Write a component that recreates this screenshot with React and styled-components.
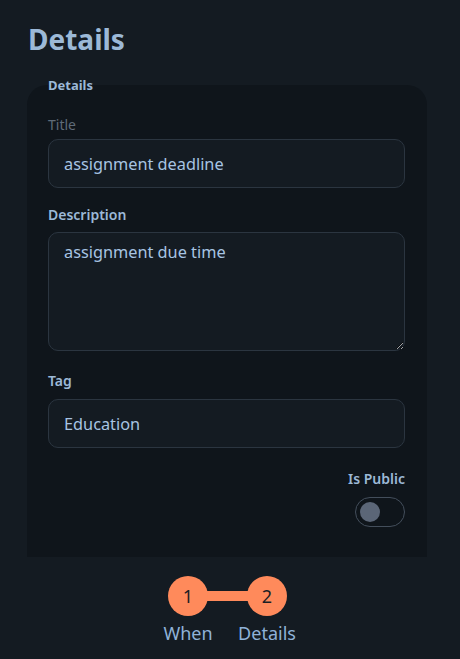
import React from 'react';
import styled, { createGlobalStyle } from 'styled-components';

const GlobalStyle = createGlobalStyle`
  html, body {
    margin: 0;
    padding: 0;
    background: #141b22;
    font-family: "Noto Sans", "Open Sans", sans-serif;
  }
`;

const Page = styled.div`
  width: 460px;
  height: 659px;
  padding: 21px 33px 0 27px;
  box-sizing: border-box;
  display: flex;
  flex-direction: column;
`;

const Heading = styled.h1`
  margin: 0 0 19px 1px;
  font-size: 28px;
  font-weight: 700;
  line-height: 36px;
  color: #9cb9d7;
`;

const Card = styled.fieldset`
  margin: 0;
  padding: 6px 22px 14px 21px;
  border: none;
  border-radius: 20px 20px 0 0;
  background: #0f151b;
  display: flex;
  flex-direction: column;
  height: 481px;
  box-sizing: border-box;
  min-width: 0;
`;

const Legend = styled.legend`
  padding: 0;
  font-size: 13px;
  font-weight: 700;
  color: #9cb9d7;
`;

const Label = styled.label`
  display: block;
  font-size: 14px;
  line-height: 20px;
  font-weight: ${p => (p.$muted ? 400 : 600)};
  color: ${p => (p.$muted ? '#5f6b78' : '#9cb9d7')};
  margin: ${p => p.$top || 0}px 0 ${p => p.$bottom ?? 7}px 0;
  text-align: ${p => (p.$right ? 'right' : 'left')};
`;

const Input = styled.input`
  width: 100%;
  box-sizing: border-box;
  height: 49px;
  padding: 0 15px;
  border: 1px solid #2b3540;
  border-radius: 10px;
  background: #141b22;
  color: #a7c4e2;
  font-family: inherit;
  font-size: 16.3px;
  outline: none;
`;

const TextArea = styled.textarea`
  width: 100%;
  box-sizing: border-box;
  height: 119px;
  padding: 7px 15px;
  border: 1px solid #2b3540;
  border-radius: 10px;
  background: #141b22;
  color: #a7c4e2;
  font-family: inherit;
  font-size: 16.3px;
  line-height: 24px;
  outline: none;
  resize: vertical;
  display: block;
`;

const SwitchRow = styled.div`
  display: flex;
  flex-direction: column;
  align-items: flex-end;
`;

const Switch = styled.button`
  position: relative;
  width: 50px;
  height: 30px;
  border: 1px solid #434e5b;
  border-radius: 15px;
  background: transparent;
  padding: 0;
  cursor: pointer;
`;

const Knob = styled.span`
  position: absolute;
  left: 4px;
  top: 4px;
  width: 20px;
  height: 20px;
  border-radius: 50%;
  background: #5b6677;
`;

const Stepper = styled.div`
  display: flex;
  justify-content: center;
  margin-top: 19px;
  margin-left: 1px;
`;

const Step = styled.div`
  position: relative;
  width: 79px;
  display: flex;
  flex-direction: column;
  align-items: center;
`;

const Connector = styled.span`
  position: absolute;
  top: 15px;
  left: 50%;
  width: 79px;
  height: 10px;
  background: #ff8a5b;
`;

const Circle = styled.span`
  position: relative;
  z-index: 1;
  width: 40px;
  height: 40px;
  border-radius: 50%;
  background: #ff8a5b;
  color: #1a1f25;
  font-size: 18px;
  display: flex;
  align-items: center;
  justify-content: center;
`;

const StepLabel = styled.span`
  margin-top: 5px;
  font-size: 18px;
  color: #8fb2d8;
  line-height: 24px;
`;

export default function App() {
  return (
    <>
      <GlobalStyle />
      <Page>
        <Heading>Details</Heading>
        <Card>
          <Legend>Details</Legend>
          <Label $muted $top={15} $bottom={4}>Title</Label>
          <Input defaultValue="assignment deadline" />
          <Label $top={17}>Description</Label>
          <TextArea defaultValue="assignment due time" />
          <Label $top={20} $bottom={8}>Tag</Label>
          <Input defaultValue="Education" />
          <SwitchRow>
            <Label $right $top={21} $bottom={8}>Is Public</Label>
            <Switch aria-label="Is Public">
              <Knob />
            </Switch>
          </SwitchRow>
        </Card>
        <Stepper>
          <Step>
            <Connector />
            <Circle>1</Circle>
            <StepLabel>When</StepLabel>
          </Step>
          <Step>
            <Circle>2</Circle>
            <StepLabel>Details</StepLabel>
          </Step>
        </Stepper>
      </Page>
    </>
  );
}
